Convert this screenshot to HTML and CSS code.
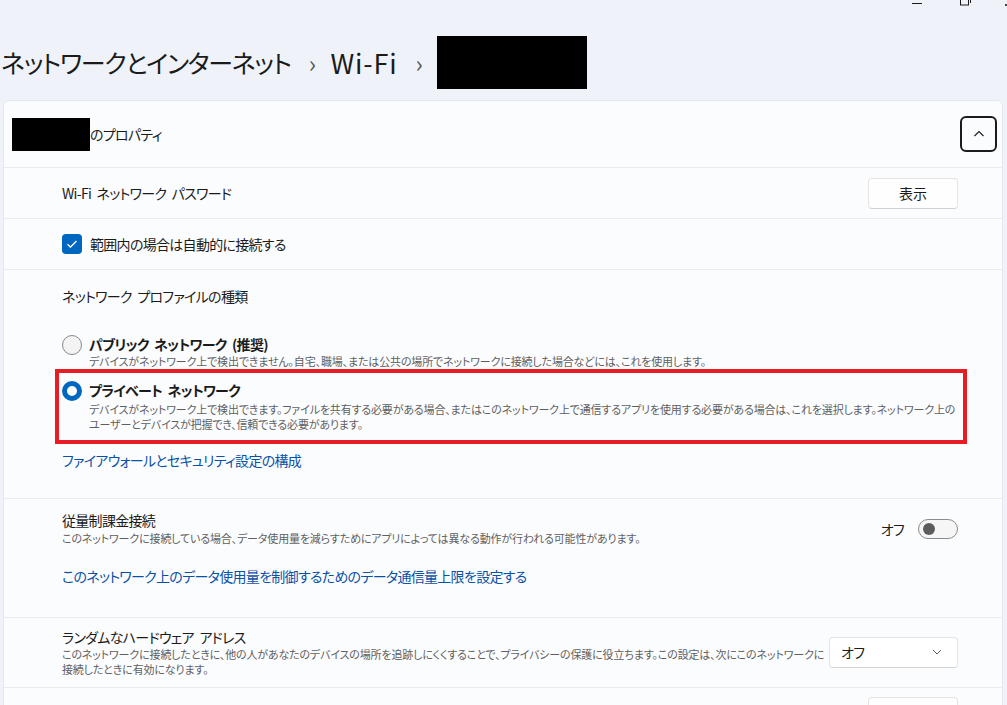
FILE: index.html
```html
<!DOCTYPE html>
<html lang="ja">
<head>
    <meta charset="UTF-8">
    <title>Wi-Fi のプロパティ</title>
    <link rel="stylesheet" href="styles.css">
</head>
<body>
    <header class="page-header">
        <div class="window-controls">
            <span class="ctl-min"></span>
            <svg class="ctl-restore" width="12" height="12" viewBox="0 0 12 12">
                <rect x="1.5" y="-4" width="8" height="9" fill="none" stroke="#1b1b1b" stroke-width="1"/>
                <path d="M3.5 -4 H11.5 V3" fill="none" stroke="#1b1b1b" stroke-width="1"/>
            </svg>
            <span class="ctl-close"></span>
        </div>
        <nav class="breadcrumb">
            <span>ネットワークとインターネット</span>
            <span class="crumb-sep">›</span>
            <span class="crumb-wifi">Wi-Fi</span>
            <span class="crumb-sep">›</span>
            <span class="redacted redacted-title"></span>
        </nav>
    </header>

    <section class="card">
        <div class="card-head">
            <div class="card-title">
                <span class="redacted redacted-name"></span>
                <span>のプロパティ</span>
            </div>
            <button class="expander" aria-label="折りたたむ">
                <svg width="12" height="8" viewBox="0 0 12 8">
                    <path d="M1.5 6 L6 1.5 L10.5 6" fill="none" stroke="#1b1b1b" stroke-width="1.1"/>
                </svg>
            </button>
        </div>

        <div class="row">
            <span class="row-label">Wi-Fi ネットワーク パスワード</span>
            <button class="btn">表示</button>
        </div>

        <div class="row">
            <label class="check">
                <span class="checkbox">
                    <svg width="12" height="10" viewBox="0 0 12 10">
                        <path d="M1.5 5.2 L4.5 8 L10.5 2" fill="none" stroke="#fff" stroke-width="1.3"/>
                    </svg>
                </span>
                <span>範囲内の場合は自動的に接続する</span>
            </label>
        </div>

        <div class="section profile">
            <div class="row-label">ネットワーク プロファイルの種類</div>

            <div class="option option-public">
                <span class="radio"></span>
                <div>
                    <div class="option-title">パブリック ネットワーク (推奨)</div>
                    <div class="desc">デバイスがネットワーク上で検出できません。自宅、職場、または公共の場所でネットワークに接続した場合などには、これを使用します。</div>
                </div>
            </div>

            <div class="highlight">
                <div class="option">
                    <span class="radio radio-on"></span>
                    <div>
                        <div class="option-title">プライベート ネットワーク</div>
                        <div class="desc">デバイスがネットワーク上で検出できます。ファイルを共有する必要がある場合、またはこのネットワーク上で通信するアプリを使用する必要がある場合は、これを選択します。ネットワーク上の<br>ユーザーとデバイスが把握でき、信頼できる必要があります。</div>
                    </div>
                </div>
            </div>

            <a class="link link-firewall" href="#">ファイアウォールとセキュリティ設定の構成</a>
        </div>

        <div class="section metered">
            <div class="setting">
                <div class="setting-text">
                    <div class="row-label">従量制課金接続</div>
                    <div class="desc">このネットワークに接続している場合、データ使用量を減らすためにアプリによっては異なる動作が行われる可能性があります。</div>
                </div>
                <div class="toggle-wrap">
                    <span>オフ</span>
                    <span class="toggle"></span>
                </div>
            </div>
            <a class="link link-limit" href="#">このネットワーク上のデータ使用量を制御するためのデータ通信量上限を設定する</a>
        </div>

        <div class="section random">
            <div class="setting">
                <div class="setting-text">
                    <div class="row-label">ランダムなハードウェア アドレス</div>
                    <div class="desc">このネットワークに接続したときに、他の人があなたのデバイスの場所を追跡しにくくすることで、プライバシーの保護に役立ちます。この設定は、次にこのネットワークに<br>接続したときに有効になります。</div>
                </div>
                <div class="select">
                    <span>オフ</span>
                    <svg width="10" height="6" viewBox="0 0 10 6">
                        <path d="M1 1 L5 5 L9 1" fill="none" stroke="#5d5d5d" stroke-width="1"/>
                    </svg>
                </div>
            </div>
        </div>

        <div class="row row-next">
            <span class="row-label">IP 割り当て:</span>
            <button class="btn">編集</button>
        </div>
    </section>
</body>
</html>
```

FILE: styles.css
```css
:root {
    --page-bg: #eff3f9;
    --card-bg: #fbfcfe;
    --divider: #e8ebf0;
    --text-color: #1b1b1b;
    --muted: #5f5f5f;
    --accent: #0067c0;
    --link: #0a51a6;
    --mark: #e81c24;
}

html, body {
    overflow: hidden;
}

body {
    margin: 0;
    background-color: var(--page-bg);
    color: var(--text-color);
    font-family: "Noto Sans CJK JP", "Noto Sans", sans-serif;
    font-feature-settings: "palt";
    font-size: 14px;
    letter-spacing: -0.7px;
    word-spacing: 3px;
}

.page-header {
    height: 100px;
    display: flex;
    flex-direction: column;
}

.window-controls {
    height: 10px;
    display: flex;
    justify-content: flex-end;
    align-items: flex-start;
    overflow: hidden;
}

.ctl-min {
    width: 10px;
    height: 1px;
    margin-top: 3px;
    background: var(--text-color);
}

.ctl-restore {
    margin-left: 37px;
}

.ctl-close {
    width: 2px;
    height: 2px;
    margin-top: 4px;
    margin-left: 34px;
    background: #444;
}

.breadcrumb {
    flex: 1;
    display: flex;
    align-items: center;
    padding-top: 14px;
    padding-left: 1px;
    font-size: 25px;
    font-weight: 400;
    letter-spacing: -1.3px;
    word-spacing: 0;
}

.crumb-wifi {
    font-size: 27px;
    letter-spacing: 0.8px;
}

.crumb-sep {
    font-size: 24px;
    color: #555;
    margin: 0 16px 0 18px;
}

.redacted {
    display: inline-block;
    background: #000;
}

.redacted-title {
    width: 150px;
    height: 53px;
}

.redacted-name {
    width: 78px;
    height: 33px;
}

.card {
    margin-left: 3px;
    width: 998px;
    background-color: var(--card-bg);
    border: 1px solid #e3e7ee;
    border-radius: 6px;
}

.card-head {
    height: 66px;
    display: flex;
    align-items: center;
    justify-content: space-between;
    padding: 0 5px 0 8px;
    border-bottom: 1px solid var(--divider);
}

.card-title {
    display: flex;
    align-items: center;
}

.expander {
    width: 37px;
    height: 36px;
    border: 2px solid var(--text-color);
    border-radius: 6px;
    background: transparent;
    display: flex;
    align-items: center;
    justify-content: center;
    padding: 0;
}

.row {
    height: 50px;
    display: flex;
    align-items: center;
    justify-content: space-between;
    padding: 0 44px 0 58px;
    border-bottom: 1px solid var(--divider);
}

.btn {
    width: 90px;
    height: 31px;
    background: #fefefe;
    border: 1px solid #e4e4e4;
    border-bottom-color: #d2d2d2;
    border-radius: 4px;
    font-family: inherit;
    font-size: 14px;
    color: var(--text-color);
}

.check {
    display: flex;
    align-items: center;
    gap: 8px;
}

.checkbox {
    width: 20px;
    height: 20px;
    border-radius: 4px;
    background: var(--accent);
    display: flex;
    align-items: center;
    justify-content: center;
}

.section {
    padding: 0 44px 0 58px;
    border-bottom: 1px solid var(--divider);
}

.profile {
    padding-top: 16px;
    padding-bottom: 28px;
}

.profile > .row-label {
    line-height: 20px;
}

.option {
    display: grid;
    grid-template-columns: 20px 1fr;
    column-gap: 7px;
    align-items: start;
}

.option-public {
    margin-top: 28px;
}

.option-title {
    font-weight: 700;
    line-height: 20px;
}

.option .radio {
    margin-top: 1px;
}

.highlight .option-title {
    margin-bottom: 2px;
}

.radio {
    width: 20px;
    height: 20px;
    box-sizing: border-box;
    border-radius: 50%;
    border: 1px solid #8a8a8a;
    background: #f4f4f4;
}

.radio-on {
    border: 5px solid var(--accent);
    background: #fff;
}

.highlight {
    margin: 0 -9px 0 -7px;
    border: 4px solid var(--mark);
    padding: 7px 0 8px 3px;
}

.desc {
    font-size: 11px;
    letter-spacing: -0.15px;
    word-spacing: 0;
    color: var(--muted);
    white-space: nowrap;
    line-height: 15px;
}

.link {
    display: block;
    color: var(--link);
    text-decoration: none;
    line-height: 20px;
}

.link-firewall {
    margin-top: 6px;
}

.metered {
    padding-top: 11px;
    padding-bottom: 31px;
}

.setting {
    display: flex;
    align-items: center;
    justify-content: space-between;
}

.setting-text {
    min-width: 0;
}

.setting .row-label {
    line-height: 20px;
}

.metered .desc {
    line-height: 17px;
}

.toggle-wrap {
    display: flex;
    align-items: center;
    gap: 14px;
    flex-shrink: 0;
}

.toggle {
    width: 40px;
    height: 20px;
    box-sizing: border-box;
    border: 1px solid #8b8b8b;
    border-radius: 10px;
    background: #f6f6f6;
    display: flex;
    align-items: center;
    padding-left: 4px;
}

.toggle::before {
    content: "";
    width: 12px;
    height: 12px;
    border-radius: 50%;
    background: #5c5c5c;
}

.link-limit {
    margin-top: 19px;
}

.random {
    padding-top: 9px;
    padding-bottom: 10px;
}

.select {
    flex-shrink: 0;
    width: 129px;
    height: 31px;
    box-sizing: border-box;
    background: #fff;
    border: 1px solid #e4e4e4;
    border-bottom-color: #d6d6d6;
    border-radius: 4px;
    display: flex;
    align-items: center;
    justify-content: space-between;
    padding: 0 15px 0 11px;
}

.row-next {
    height: 60px;
    align-items: flex-start;
    padding-top: 9px;
    border-bottom: none;
}

.row-next .row-label {
    margin-top: 10px;
}
```
